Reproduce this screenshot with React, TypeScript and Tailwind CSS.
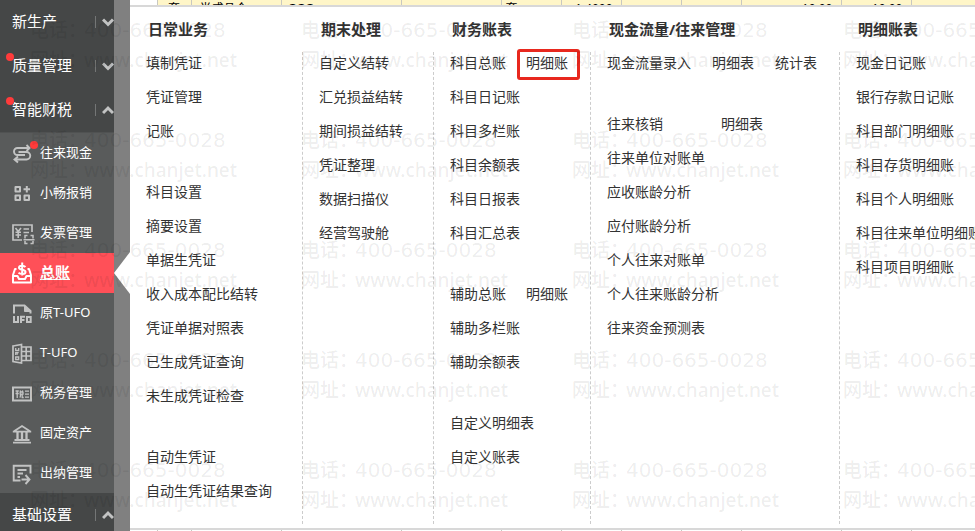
import type { ReactNode } from 'react';

type MenuRow = { items: string[]; gap?: string; marked?: number };

const row = (...items: string[]): MenuRow => ({ items });

const MENU: { title: string; className: string; groups: MenuRow[][] }[] = [
  {
    title: '日常业务',
    className: 'pl-4 pr-[30px]',
    groups: [
      [row('填制凭证'), row('凭证管理'), row('记账')],
      [
        row('科目设置'),
        row('摘要设置'),
        row('单据生凭证'),
        row('收入成本配比结转'),
        row('凭证单据对照表'),
        row('已生成凭证查询'),
        row('未生成凭证检查'),
      ],
      [row('自动生凭证'), row('自动生凭证结果查询')],
    ],
  },
  {
    title: '期末处理',
    className: 'pl-4 pr-[30px]',
    groups: [
      [
        row('自定义结转'),
        row('汇兑损益结转'),
        row('期间损益结转'),
        row('凭证整理'),
        row('数据扫描仪'),
        row('经营驾驶舱'),
      ],
    ],
  },
  {
    title: '财务账表',
    className: 'pl-4 pr-[22px]',
    groups: [
      [
        { items: ['科目总账', '明细账'], marked: 1 },
        row('科目日记账'),
        row('科目多栏账'),
        row('科目余额表'),
        row('科目日报表'),
        row('科目汇总表'),
      ],
      [row('辅助总账', '明细账'), row('辅助多栏账'), row('辅助余额表')],
      [row('自定义明细表'), row('自定义账表')],
    ],
  },
  {
    title: '现金流量/往来管理',
    className: 'pl-4 pr-[22px]',
    groups: [
      [{ items: ['现金流量录入', '明细表', '统计表'], gap: 'gap-[21px]' }],
      [
        { items: ['往来核销', '明细表'], gap: 'gap-[58px]' },
        row('往来单位对账单'),
        row('应收账龄分析'),
        row('应付账龄分析'),
        row('个人往来对账单'),
        row('个人往来账龄分析'),
        row('往来资金预测表'),
      ],
    ],
  },
  {
    title: '明细账表',
    className: 'pl-4',
    groups: [
      [
        row('现金日记账'),
        row('银行存款日记账'),
        row('科目部门明细账'),
        row('科目存货明细账'),
        row('科目个人明细账'),
        row('科目往来单位明细账'),
        row('科目项目明细账'),
      ],
    ],
  },
];

function Icon({ children }: { children: ReactNode }) {
  return (
    <svg
      viewBox="0 0 20 20"
      className="size-5 shrink-0 overflow-visible"
      fill="none"
      stroke="currentColor"
      strokeWidth="2"
      aria-hidden="true"
    >
      {children}
    </svg>
  );
}

const SUB_ITEMS: { label: string; dot?: boolean; active?: boolean; icon: ReactNode }[] = [
  {
    label: '往来现金',
    dot: true,
    icon: (
      <Icon>
        <path d="M17.500 5H5.500a3.300 3.300 0 0 0 0 7H13M14.500 2l3 3-3 3" strokeWidth="1.900" />
        <path d="M6.500 9H14.500a3.400 3.400 0 0 1 0 7.500H2.500M6 13.500l-3.500 3 3.500 3" strokeWidth="1.900" />
      </Icon>
    ),
  },
  {
    label: '小畅报销',
    icon: (
      <Icon>
        <path d="M3.500 4h4.500v4.500H3.500zM3.500 12.500h4.500V17H3.500zM12.500 12.500H17V17h-4.500zM14.800 3v6.500M11.500 6.200h6.500" strokeLinejoin="round" />
      </Icon>
    ),
  },
  {
    label: '发票管理',
    icon: (
      <Icon>
        <path d="M10 17H1V2h19v7" strokeWidth="1.700" />
        <path d="M3.500 5l2.700 3.500L9 5M6.200 8.500V15M3.500 9.200H9M3.500 12H9M11.500 6H17M11.500 9.500H17" strokeWidth="1.600" />
        <path d="M13 15.500V12.500h2.500M18.500 12.500H21v3M13 18v2.500h2.500M18.500 20.500H21V18M11.500 16.700h11" strokeWidth="1.500" />
      </Icon>
    ),
  },
  {
    label: '总账',
    active: true,
    icon: (
      <Icon>
        <path d="M4.500 6H3L1 12v7.500h18V12l-2-6h-1.500M1 13h4.500l1.500 3h6l1.500-3H19" strokeLinejoin="round" />
        <path d="M13.500 4C12 2.300 7 2 7 4.700c0 2.700 6.500 1.300 6.500 4.200 0 2.600-5 2.500-7 .8M10.200-.5v13" />
      </Icon>
    ),
  },
  {
    label: '原T-UFO',
    icon: (
      <Icon>
        <path d="M2 10.500V2.500h10.500l6 5.500v2.500" />
        <path d="M12.500 2.500l6 6h-6z" fill="currentColor" strokeWidth="1" />
        <path d="M2 13v6h4v-6M9 20v-6.300h4M9 17h3.500M15 14h3.700v5H15z" />
      </Icon>
    ),
  },
  {
    label: 'T-UFO',
    icon: (
      <Icon>
        <path d="M1 3l8.500-1.500V20L1 18.500zM9.500 4H19v13.500H9.500M9.500 8.500H19M9.500 13H19M14.200 4v13.500" strokeWidth="1.700" />
        <path d="M3.700 5v2.500h3V5M6.700 9.700h-3V12M5.200 9.700v2M3.700 14h3v2.500h-3z" strokeWidth="1.300" />
      </Icon>
    ),
  },
  {
    label: '税务管理',
    icon: (
      <Icon>
        <path d="M1 4.500h18v13H1z" />
        <path d="M3.500 8h3.300M5.200 7.500V15M3.500 10.500h3.300M8 7.500l.8 1.200M10.800 7.500l-.8 1.200M8.200 9.200h2.800v2H8.200zM8.700 11.500l-.7 3.200M10.200 11.500v3h1.500M13 8.200h4M13 11.200h4M13 14.200h4" strokeWidth="1.300" />
      </Icon>
    ),
  },
  {
    label: '固定资产',
    icon: (
      <Icon>
        <path d="M2 8.200 10 3l8 5.200M.8 8.700h18.400M2.500 17h15M1 19.700h18" strokeWidth="1.800" />
        <path d="M5.500 9v8M10 9v8M14.500 9v8" strokeWidth="2.300" />
      </Icon>
    ),
  },
  {
    label: '出纳管理',
    icon: (
      <Icon>
        <path d="M8.500 17.500H1.700V2.700h16.800v7.800M5.500 7h9M5.500 10.500h5.500M5.500 14H8M9.500 16.500h7.500M13.500 12l4 4.500-4 4.500" strokeWidth="1.900" />
      </Icon>
    ),
  },
];

function Dot({ className }: { className: string }) {
  return <span className={`absolute size-2 rounded-full bg-[#ff3b3b] ${className}`} />;
}

function GroupButton({ label, open, dot }: { label: string; open?: boolean; dot?: boolean }) {
  return (
    <button
      type="button"
      aria-expanded={!!open}
      className="relative flex h-11 w-full shrink-0 items-center bg-[#454747] pl-3 text-left text-[15px] text-white"
    >
      {dot && <Dot className="left-1.5 top-[9px]" />}
      <span className="flex-1">{label}</span>
      <span className="mr-1.5 h-3 w-px bg-[#747676]" />
      <svg viewBox="0 0 12 12" className="size-3" fill="none" stroke="#c2c3c3" strokeWidth="3" aria-hidden="true">
        <path d={open ? 'M1 9l5-5 5 5' : 'M1 3.500l5 5 5-5'} />
      </svg>
    </button>
  );
}

function Sidebar() {
  return (
    <nav className="w-[114px] shrink-0 bg-[#454747]">
      <GroupButton label="新生产" />
      <GroupButton label="质量管理" dot />
      <GroupButton label="智能财税" open dot />
      <ul className="border-t border-[#505252] bg-[#595b5b]">
        {SUB_ITEMS.map((item) => (
          <li key={item.label}>
            <a
              href="#"
              className={`relative flex h-10 items-center gap-2 pl-3 text-[13px] ${
                item.active ? 'bg-[#ff5058] font-bold text-white' : 'text-[#c2c3c3]'
              }`}
            >
              {item.icon}
              {item.dot && <Dot className="left-[30px] top-2" />}
              <span className={item.active ? 'text-[15px] underline' : 'pb-0.5 text-white'}>{item.label}</span>
            </a>
          </li>
        ))}
      </ul>
      <GroupButton label="基础设置" open />
    </nav>
  );
}

function Rail() {
  return (
    <div className="relative w-4 shrink-0 bg-[#808080]">
      <svg viewBox="0 0 16 42" className="absolute left-0 top-[252px] h-[42px] w-4" aria-hidden="true">
        <path d="M16 0v42L0 21z" fill="#fff" />
      </svg>
    </div>
  );
}

function MenuColumn({ title, className, groups }: (typeof MENU)[number]) {
  return (
    <section className="group flex shrink-0 flex-col pt-2">
      <h2 className="pl-[19px] text-[15px] leading-7 font-bold text-[#333] group-first:pl-[18px]">{title}</h2>
      <div
        className={`mt-[9px] mb-1 flex flex-1 flex-col gap-[27px] border-l border-dashed border-[#ccc] group-first:border-l-0 ${className}`}
      >
        {groups.map((group) => (
          <ul key={group[0].items[0]} className="first:-mt-1.5">
            {group.map(({ items, gap, marked }) => (
              <li key={items[0]} className={`flex h-[34px] items-center ${gap ?? 'gap-5'}`}>
                {items.map((item, i) => (
                  <a key={item} href="#" className="relative whitespace-nowrap">
                    {item}
                    {i === marked && (
                      <span className="absolute -top-1 -right-3 -bottom-[7px] -left-[9px] rounded-[3px] border-3 border-[#e8281e]" />
                    )}
                  </a>
                ))}
              </li>
            ))}
          </ul>
        ))}
      </div>
    </section>
  );
}

const CELLS = [
  { width: 'w-[27px]', text: '' },
  { width: 'w-[34px]', text: '套', align: 'text-center' },
  { width: 'w-[90px]', text: '半成品仓', align: 'pl-2' },
  { width: 'w-[120px]', text: 'GGG', align: 'pl-1.5' },
  { width: 'w-[100px]', text: '' },
  { width: 'w-[60px]', text: '套', align: 'pl-1' },
  { width: 'w-[60px]', text: '1.4000', align: 'pr-2 text-right' },
  { width: 'w-[60px]', text: '' },
  { width: 'w-[60px]', text: '' },
  { width: 'w-[100px]', text: '10.00', align: 'pr-2 text-right' },
  { width: 'w-[70px]', text: '10.00', align: 'pr-2 text-right' },
  { width: 'w-[64px]', text: '' },
];

// Slivers of the voucher grid that stay visible above and below the menu panel.
function GridSliver({ filled }: { filled?: boolean }) {
  return (
    <div className={`shrink-0 overflow-hidden ${filled ? 'h-[5px]' : 'h-px'}`}>
      <table className="w-full min-w-[845px] table-fixed border-collapse text-xs leading-[18px] text-black">
        <tbody>
          <tr>
            {CELLS.map((cell, i) => (
              <td
                key={i}
                className={`border-r border-[#c8c8c0] p-0 ${cell.width} ${i > 0 && filled ? 'bg-[#fff6c8]' : 'bg-white'} ${cell.align ?? ''}`}
              >
                <span className="block h-[18px]">{filled ? cell.text : ''}</span>
              </td>
            ))}
          </tr>
        </tbody>
      </table>
    </div>
  );
}

function Watermark() {
  return (
    <div className="pointer-events-none absolute inset-0 overflow-hidden" aria-hidden="true">
      <div className="-mt-[145px] ml-[30px] grid w-[1084px] grid-cols-4 text-[19px] font-medium text-black/8">
        {Array.from({ length: 24 }, (_, i) => (
          <div key={i} className="flex h-[110px] flex-col justify-end leading-[30px] whitespace-nowrap">
            <p className="flex">
              <span className="w-[54px]">电话：</span>
              <span className="font-['DejaVu_Sans',sans-serif] text-xl leading-[30px]">400-665-0028</span>
            </p>
            <p className="flex">
              <span className="w-[54px]">网址：</span>
              <span>www.chanjet.net</span>
            </p>
          </div>
        ))}
      </div>
    </div>
  );
}

export default function App() {
  return (
    <div className="relative flex h-screen overflow-hidden bg-white font-['Noto_Sans','Noto_Sans_CJK_SC',sans-serif] text-sm text-[#333]">
      <Sidebar />
      <Rail />
      <main className="flex min-w-0 flex-1 flex-col overflow-hidden">
        <GridSliver filled />
        <div className="flex min-h-0 flex-1 border-y-2 border-[#d8d8d8] bg-white">
          {MENU.map((column) => (
            <MenuColumn key={column.title} {...column} />
          ))}
        </div>
        <GridSliver />
      </main>
      <Watermark />
    </div>
  );
}
